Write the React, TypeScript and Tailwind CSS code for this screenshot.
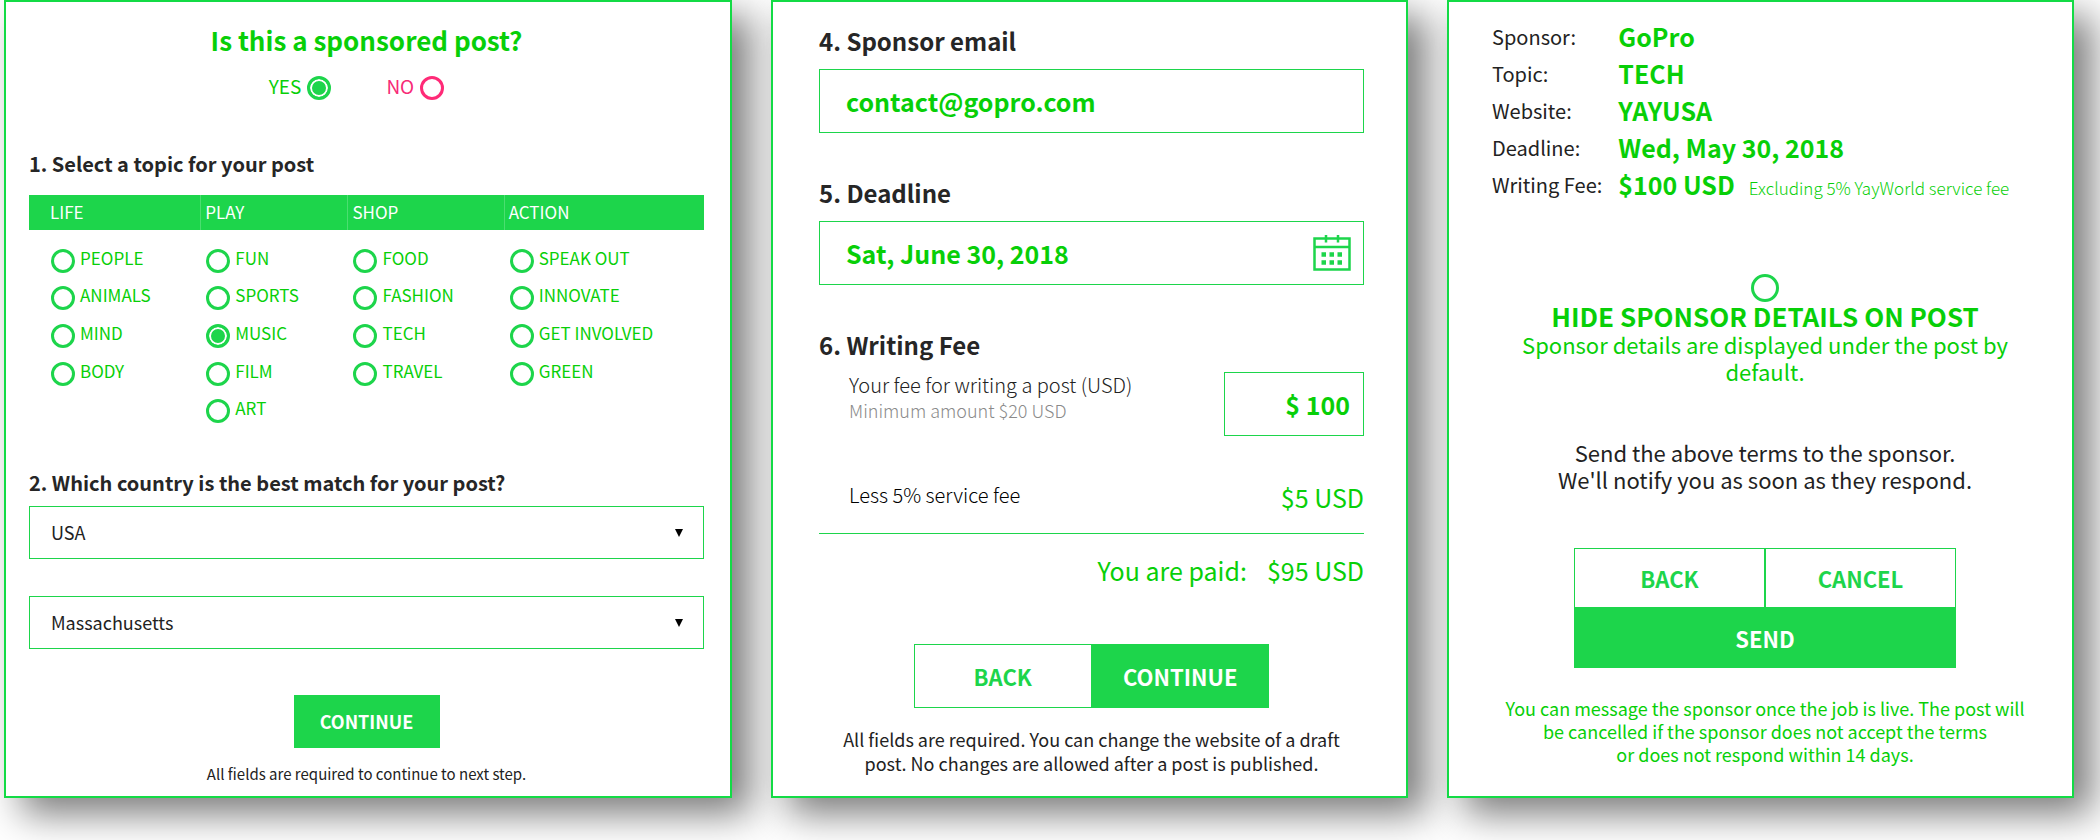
import React from "react";

const topics = [
  { name: "LIFE", items: ["PEOPLE", "ANIMALS", "MIND", "BODY"] },
  { name: "PLAY", items: ["FUN", "SPORTS", "MUSIC", "FILM", "ART"] },
  { name: "SHOP", items: ["FOOD", "FASHION", "TECH", "TRAVEL"] },
  { name: "ACTION", items: ["SPEAK OUT", "INNOVATE", "GET INVOLVED", "GREEN"] },
];

const terms = [
  { label: "Sponsor:", value: "GoPro" },
  { label: "Topic:", value: "TECH" },
  { label: "Website:", value: "YAYUSA" },
  { label: "Deadline:", value: "Wed, May 30, 2018" },
  { label: "Writing Fee:", value: "$100 USD", note: "Excluding 5% YayWorld service fee" },
];

const card =
  "relative flex min-w-0 flex-col border-2 border-[#13db45] bg-white shadow-[18px_16px_36px_rgba(0,0,0,0.52)]";
const radio =
  "size-6 shrink-0 appearance-none rounded-full border-3 border-[#1dd54b] bg-white checked:bg-[#1dd54b] checked:shadow-[inset_0_0_0_2px_#ffffff]";
const radioPink =
  "size-6 shrink-0 appearance-none rounded-full border-3 border-[#ff2a77] bg-white checked:bg-[#ff2a77] checked:shadow-[inset_0_0_0_2px_#ffffff]";
const field = "border border-[#1dd54b] bg-white";
const topicTitle = "text-[20px] leading-6 font-bold text-[#262626]";
const detailTitle = "text-[24px] leading-6 font-bold text-[#262626]";
const primary = "border border-[#1dd54b] bg-[#1dd54b] font-bold text-white";
const outline = "border border-[#1dd54b] bg-white font-bold text-[#1dd54b]";

function SelectBox({ label, value }: { label: string; value: string }) {
  return (
    <div className="relative">
      <select
        aria-label={label}
        defaultValue={value}
        className={`${field} block h-[53px] w-full appearance-none px-[21px] text-[18px] text-[#222222]`}
      >
        <option>{value}</option>
      </select>
      <svg
        viewBox="0 0 8 8"
        className="pointer-events-none absolute top-[23px] right-[21px] size-2 fill-black"
        aria-hidden="true"
      >
        <path d="M0 0h8L4 8z" />
      </svg>
    </div>
  );
}

function CalendarIcon() {
  return (
    <svg viewBox="0 0 38 36" className="h-9 w-[38px]" fill="none" stroke="#1dd54b" strokeWidth="2.5" aria-hidden="true">
      <path d="M1.5 3.5h35v31h-35zM1.5 12h35M13 0v7.5M25 0v7.5" />
      <path d="M8.5 19.5h4.5M16.5 19.5h4.5M24.5 19.5h4.5M8.5 27.5h4.5M16.5 27.5h4.5M24.5 27.5h4.5" strokeWidth="4.5" />
    </svg>
  );
}

function TopicCard() {
  return (
    <section className={`${card} pt-[22px] pr-[26px] pb-3 pl-[23px]`}>
      <h1 className="text-center text-[26px] leading-8 font-bold text-[#08cf08]">Is this a sponsored post?</h1>
      <div className="mt-5 flex justify-center gap-[55px] pr-5">
        <label className="flex items-start gap-[6px] text-[19px] leading-5 text-[#08cf08]">
          YES
          <input type="radio" name="sponsored" defaultChecked className={radio} />
        </label>
        <label className="flex items-start gap-[6px] text-[19px] leading-5 text-[#f72a77]">
          NO
          <input type="radio" name="sponsored" className={radioPink} />
        </label>
      </div>

      <h2 className={`${topicTitle} mt-[52px]`}>1. Select a topic for your post</h2>
      <div className="mt-[19px] grid grid-cols-[171fr_147fr_156fr_200fr]">
        {topics.map((topic, column) => (
          <div key={topic.name} role="group" aria-label={topic.name}>
            <h3
              className={`h-[35px] bg-[#1dd54b] text-[17px] leading-[33px] text-white ${
                column === 0 ? "pl-[21px]" : "border-l border-[#4bde70] pl-1"
              }`}
            >
              {topic.name}
            </h3>
            <ul className={`mt-3 grid h-[188px] grid-rows-5 ${column === 0 ? "pl-[22px]" : "pl-[6px]"}`}>
              {topic.items.map((item) => (
                <li key={item} className="flex items-center">
                  <label className="flex items-start gap-[5px] text-[17px] leading-[18px] text-[#08cf08]">
                    <input type="radio" name="topic" defaultChecked={item === "MUSIC"} className={radio} />
                    {item}
                  </label>
                </li>
              ))}
            </ul>
          </div>
        ))}
      </div>

      <h2 className={`${topicTitle} mt-[41px]`}>2. Which country is the best match for your post?</h2>
      <div className="mt-[11px] flex flex-col gap-[37px]">
        <SelectBox label="Country" value="USA" />
        <SelectBox label="State" value="Massachusetts" />
      </div>
      <button type="button" className={`${primary} mt-[46px] h-[53px] w-[146px] self-center text-[18px]`}>
        CONTINUE
      </button>
      <p className="mt-4 text-center text-[15px] leading-5 text-[#222222]">
        All fields are required to continue to next step.
      </p>
    </section>
  );
}

function DetailsCard() {
  return (
    <section className={`${card} pt-[27px] pr-[42px] pb-[21px] pl-[46px]`}>
      <label htmlFor="email" className={detailTitle}>
        4. Sponsor email
      </label>
      <input
        id="email"
        type="email"
        defaultValue="contact@gopro.com"
        className={`${field} mt-4 h-16 w-full px-[26px] text-[25px] font-bold text-[#08cf08]`}
      />
      <label htmlFor="deadline" className={`${detailTitle} mt-12`}>
        5. Deadline
      </label>
      <div className={`${field} mt-4 flex h-16 items-center pr-3`}>
        <input
          id="deadline"
          type="text"
          defaultValue="Sat, June 30, 2018"
          className="h-full min-w-0 flex-1 px-[26px] text-[25px] font-bold text-[#08cf08]"
        />
        <button type="button" aria-label="Open calendar">
          <CalendarIcon />
        </button>
      </div>
      <h2 className={`${detailTitle} mt-12`}>6. Writing Fee</h2>
      <div className="mt-[15px] flex justify-between pl-[30px]">
        <label htmlFor="fee" className="flex flex-col font-light">
          <span className="text-[20px] leading-[26px] text-[#222222]">Your fee for writing a post (USD)</span>
          <span className="text-[18px] leading-6 text-[#8a8a8a]">Minimum amount $20 USD</span>
        </label>
        <input
          id="fee"
          type="text"
          defaultValue="$ 100"
          className={`${field} h-16 w-[140px] px-[13px] text-right text-[25px] font-bold text-[#08cf08]`}
        />
      </div>
      <div className="mt-[45px] flex justify-between border-b border-[#1dd54b] pb-5 pl-[30px]">
        <span className="text-[20px] leading-7 font-light text-black">Less 5% service fee</span>
        <span className="text-[25px] leading-8 text-[#08cf08]">$5 USD</span>
      </div>
      <p className="mt-5 flex justify-end gap-5 text-[25px] leading-8 text-[#08cf08]">
        <span>You are paid:</span>
        <span>$95 USD</span>
      </p>
      <div className="mt-[58px] grid w-[355px] grid-cols-2 self-center text-[22px]">
        <button type="button" className={`${outline} h-16`}>BACK</button>
        <button type="button" className={`${primary} h-16`}>CONTINUE</button>
      </div>
      <p className="mt-[19px] text-center text-[18px] leading-6 text-[#222222]">
        All fields are required. You can change the website of a draft
        <br />
        post. No changes are allowed after a post is published.
      </p>
    </section>
  );
}

function ReviewCard() {
  return (
    <section className={`${card} pt-4 pr-[34px] pb-[30px] pl-[43px]`}>
      <dl className="grid grid-cols-[auto_1fr] gap-x-4 leading-[37px] whitespace-nowrap">
        {terms.map((term) => (
          <React.Fragment key={term.label}>
            <dt className="text-[20px] text-[#222222]">{term.label}</dt>
            <dd className="flex h-[37px] items-baseline gap-[14px] text-[25px] font-bold text-[#08cf08]">
              {term.value}
              {term.note && <span className="text-[17px] font-light">{term.note}</span>}
            </dd>
          </React.Fragment>
        ))}
      </dl>
      <label className="mt-[71px] flex flex-col items-center text-center text-[#08cf08]">
        <input
          type="radio"
          name="hide"
          className="size-7 appearance-none rounded-full border-3 border-[#1dd54b] bg-white checked:bg-[#1dd54b]"
        />
        <span className="text-[26px] leading-7 font-bold">HIDE SPONSOR DETAILS ON POST</span>
        <span className="pt-px text-[22px] leading-[27px]">
          Sponsor details are displayed under the post by
          <br />
          default.
        </span>
      </label>
      <p className="mt-[54px] text-center text-[22px] leading-[27px] text-[#222222]">
        Send the above terms to the sponsor.
        <br />
        We'll notify you as soon as they respond.
      </p>
      <div className="mt-[55px] grid w-[382px] grid-cols-2 self-center text-[22px]">
        <button type="button" className={`${outline} h-[60px]`}>BACK</button>
        <button type="button" className={`${outline} h-[60px]`}>CANCEL</button>
        <button type="button" className={`${primary} col-span-2 h-[60px]`}>SEND</button>
      </div>
      <p className="mt-[29px] text-center text-[18px] leading-[23px] text-[#08cf08]">
        You can message the sponsor once the job is live. The post will
        <br />
        be cancelled if the sponsor does not accept the terms
        <br />
        or does not respond within 14 days.
      </p>
    </section>
  );
}

export default function App() {
  return (
    <main className="grid gap-[39px] bg-white pr-[26px] pb-[42px] pl-1 font-['Noto_Sans_CJK_SC',sans-serif] xl:grid-cols-[728fr_637fr_627fr]">
      <TopicCard />
      <DetailsCard />
      <ReviewCard />
    </main>
  );
}
